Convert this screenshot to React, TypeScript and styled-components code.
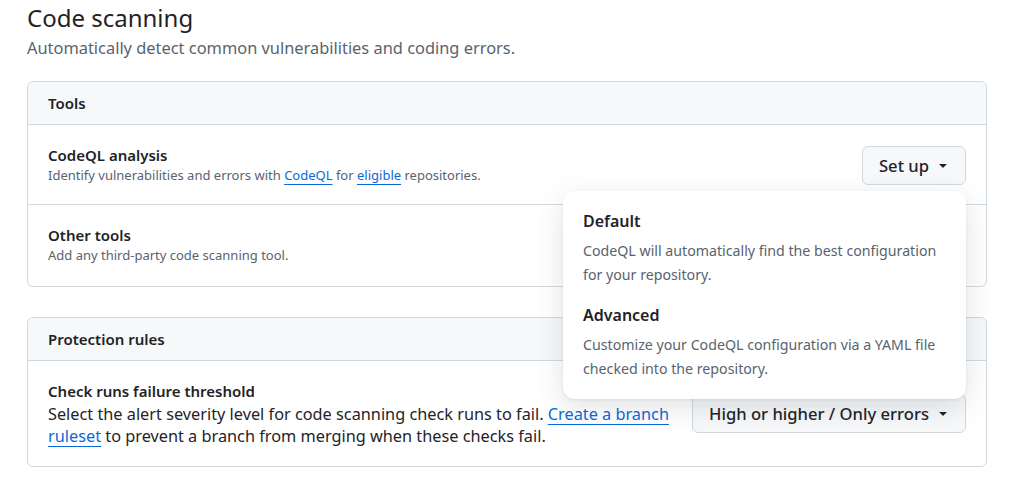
import styled, { createGlobalStyle } from "styled-components";

const GlobalStyle = createGlobalStyle`
  body {
    margin: 0;
    background: #ffffff;
    font-family: "Noto Sans", "Liberation Sans", sans-serif;
    color: #1f2328;
  }
`;

const Page = styled.div`
  padding: 0 26px 0 27px;
`;

const Title = styled.h2`
  margin: 0;
  font-size: 24px;
  font-weight: 400;
  line-height: 36px;
`;

const Subtitle = styled.p`
  margin: 0 0 21px;
  font-size: 16.4px;
  line-height: 24px;
  color: #59636e;
`;

const Box = styled.section`
  border: 1px solid #d1d9e0;
  border-radius: 6px;
  margin-bottom: 30px;
`;

const BoxHeader = styled.div`
  padding: 11px 20px;
  background: #f6f8fa;
  border-bottom: 1px solid #d1d9e0;
  border-radius: 6px 6px 0 0;
  font-size: 15px;
  font-weight: 600;
  line-height: 20px;
`;

const Row = styled.div<{ $pad?: string }>`
  display: flex;
  align-items: center;
  justify-content: space-between;
  gap: 16px;
  padding: ${(p) => p.$pad ?? "20px 20px 19px"};
  & + & {
    border-top: 1px solid #d1d9e0;
  }
`;

const RowText = styled.div`
  display: flex;
  flex-direction: column;
`;

const RowTitle = styled.div<{ $lh?: number }>`
  font-size: 15px;
  font-weight: 600;
  line-height: ${(p) => p.$lh ?? 20}px;
`;

const RowDesc = styled.div<{ $large?: boolean }>`
  font-size: ${(p) => (p.$large ? "16.3px" : "13px")};
  line-height: ${(p) => (p.$large ? "22px" : "20px")};
  color: ${(p) => (p.$large ? "#1f2328" : "#59636e")};
`;

const Link = styled.a`
  color: #0969da;
  text-decoration: underline;
  text-underline-offset: 4px;
  text-decoration-thickness: 1px;
`;

const ButtonWrap = styled.div`
  position: relative;
  flex-shrink: 0;
`;

const Button = styled.button`
  display: flex;
  align-items: center;
  gap: 6px;
  height: 39px;
  padding: 0 14px 0 16px;
  background: #f6f8fa;
  border: 1px solid #d1d9e0;
  border-radius: 6px;
  font-family: inherit;
  font-size: 16.6px;
  font-weight: 500;
  color: #1f2328;
  white-space: nowrap;
`;

const Popover = styled.div`
  position: absolute;
  top: 45px;
  right: 0;
  z-index: 10;
  width: 363px;
  padding: 16px 20px 18px;
  background: #ffffff;
  border-radius: 12px;
  box-shadow: 0 1px 3px rgba(31, 35, 40, 0.08),
    0 8px 28px rgba(66, 74, 83, 0.16);
`;

const Option = styled.div`
  & + & {
    margin-top: 14px;
  }
`;

const OptionTitle = styled.div`
  font-size: 16px;
  font-weight: 600;
  line-height: 28px;
  margin-bottom: 4px;
`;

const OptionDesc = styled.div`
  font-size: 14.2px;
  line-height: 24px;
  color: #59636e;
`;

function Caret() {
  return (
    <svg width="16" height="16" viewBox="0 0 16 16" fill="#1f2328">
      <path d="m4.427 7.427 3.396 3.396a.25.25 0 0 0 .354 0l3.396-3.396A.25.25 0 0 0 11.396 7H4.604a.25.25 0 0 0-.177.427Z" />
    </svg>
  );
}

export default function App() {
  return (
    <Page>
      <GlobalStyle />
      <Title>Code scanning</Title>
      <Subtitle>Automatically detect common vulnerabilities and coding errors.</Subtitle>

      <Box>
        <BoxHeader>Tools</BoxHeader>
        <Row>
          <RowText>
            <RowTitle>CodeQL analysis</RowTitle>
            <RowDesc>
              Identify vulnerabilities and errors with <Link>CodeQL</Link> for{" "}
              <Link>eligible</Link> repositories.
            </RowDesc>
          </RowText>
          <ButtonWrap>
            <Button>
              Set up <Caret />
            </Button>
            <Popover>
              <Option>
                <OptionTitle>Default</OptionTitle>
                <OptionDesc>
                  CodeQL will automatically find the best configuration for your
                  repository.
                </OptionDesc>
              </Option>
              <Option>
                <OptionTitle>Advanced</OptionTitle>
                <OptionDesc>
                  Customize your CodeQL configuration via a YAML file checked into
                  the repository.
                </OptionDesc>
              </Option>
            </Popover>
          </ButtonWrap>
        </Row>
        <Row $pad="20px 20px 21px">
          <RowText>
            <RowTitle>Other tools</RowTitle>
            <RowDesc>Add any third-party code scanning tool.</RowDesc>
          </RowText>
        </Row>
      </Box>

      <Box>
        <BoxHeader>Protection rules</BoxHeader>
        <Row $pad="18px 20px 19px">
          <RowText>
            <RowTitle $lh={24}>Check runs failure threshold</RowTitle>
            <RowDesc $large>
              Select the alert severity level for code scanning check runs to fail.{" "}
              <Link>Create a branch ruleset</Link> to prevent a branch from merging
              when these checks fail.
            </RowDesc>
          </RowText>
          <ButtonWrap>
            <Button>
              High or higher / Only errors <Caret />
            </Button>
          </ButtonWrap>
        </Row>
      </Box>
    </Page>
  );
}
